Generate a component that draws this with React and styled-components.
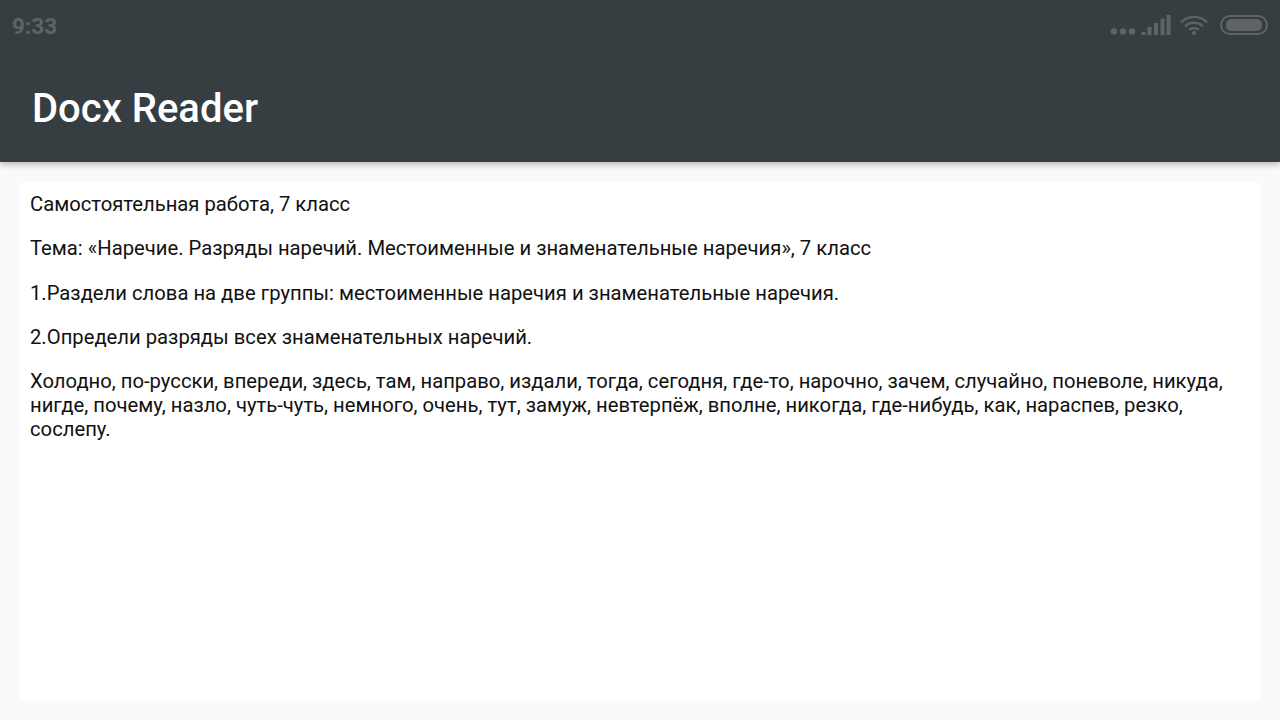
import styled, { createGlobalStyle } from 'styled-components';

const Global = createGlobalStyle`
  html, body {
    margin: 0;
    padding: 0;
    background: #fafafa;
  }
`;

// Style

const Screen = styled.div`
  width: 1280px;
  height: 720px;
  display: flex;
  flex-direction: column;
  overflow: hidden;
  background: #fafafa;
  font-family: Roboto, "Noto Sans", sans-serif;
`;

const Header = styled.header`
  height: 162px;
  flex: none;
  background: #363e41;
  box-shadow: 0 2px 7px rgba(0, 0, 0, 0.3);
  position: relative;
  z-index: 1;
`;

const StatusBar = styled.div`
  height: 50px;
  display: flex;
  align-items: center;
  justify-content: space-between;
  padding: 0 12px;
`;

const Clock = styled.span`
  padding-top: 2px;
  font-size: 22.6px;
  font-weight: 700;
  color: #5e6466;
`;

const StatusIcons = styled.div`
  display: flex;
  align-items: center;
  gap: 8px;
`;

const Title = styled.h1`
  margin: 0;
  padding: 34px 0 0 32px;
  font-size: 40px;
  line-height: 50px;
  font-weight: 500;
  color: #fff;
`;

const Content = styled.main`
  flex: 1;
  margin: 20px;
  padding: 10px;
  background: #fff;
`;

const Paragraph = styled.p`
  margin: 0 0 20.33px;
  font-size: 20.24px;
  line-height: 24px;
  color: #111;
`;

// Logic

const paragraphs = [
  'Самостоятельная работа, 7 класс',
  'Тема: «Наречие. Разряды наречий. Местоименные и знаменательные наречия», 7 класс',
  '1.Раздели слова на две группы: местоименные наречия и знаменательные наречия.',
  '2.Определи разряды всех знаменательных наречий.',
  'Холодно, по-русски, впереди, здесь, там, направо, издали, тогда, сегодня, где-то, нарочно, зачем, случайно, поневоле, никуда, нигде, почему, назло, чуть-чуть, немного, очень, тут, замуж, невтерпёж, вполне, никогда, где-нибудь, как, нараспев, резко, сослепу.',
];

function Signal() {
  return (
    <svg width="62" height="22" viewBox="0 0 62 22" fill="#5e6466">
      <circle cx="4" cy="17.5" r="3.2" />
      <circle cx="13" cy="17.5" r="3.2" />
      <circle cx="22" cy="17.5" r="3.2" />
      <rect x="31.5" y="18" width="4" height="3" />
      <rect x="37.5" y="13" width="4" height="8" />
      <rect x="44" y="9" width="4" height="12" />
      <rect x="50.5" y="4.5" width="4" height="16.5" />
      <rect x="56.5" y="1" width="4" height="20" />
    </svg>
  );
}

function Wifi() {
  return (
    <svg width="32" height="22" viewBox="0 0 32 22" fill="none" stroke="#5e6466" strokeWidth="2.4">
      <path d="M1 8.5C7.5 1 20.5 1 27 8.5" />
      <path d="M5 12.5C9.5 7.5 18.5 7.5 23 12.5" />
      <path d="M9 16C11.5 13.5 16.5 13.5 19 16" />
      <circle cx="14" cy="19" r="2" fill="#5e6466" stroke="none" />
    </svg>
  );
}

function Battery() {
  return (
    <svg width="48" height="22" viewBox="0 0 48 22">
      <rect x="1" y="2" width="46" height="18" rx="9" fill="none" stroke="#5e6466" strokeWidth="2" />
      <rect x="6" y="5" width="36" height="12" rx="5" fill="#5e6466" />
    </svg>
  );
}

export default function App() {
  return (
    <Screen>
      <Global />
      <Header>
        <StatusBar>
          <Clock>9:33</Clock>
          <StatusIcons>
            <Signal />
            <Wifi />
            <Battery />
          </StatusIcons>
        </StatusBar>
        <Title>Docx Reader</Title>
      </Header>
      <Content>
        {paragraphs.map((text) => (
          <Paragraph key={text}>{text}</Paragraph>
        ))}
      </Content>
    </Screen>
  );
}
